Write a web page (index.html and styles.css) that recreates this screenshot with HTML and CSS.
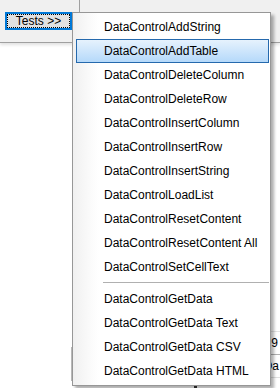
FILE: index.html
```html
<!DOCTYPE html>
<html lang="en">
<head>
    <meta charset="UTF-8">
    <meta name="viewport" content="width=device-width, initial-scale=1.0">
    <title>Tests menu</title>
    <link rel="stylesheet" href="styles.css">
</head>
<body>

<div class="toolbar">
    <div class="toolbar-edge"></div>
    <button class="tests-button"><span class="focus-box">Tests &gt;&gt;</span></button>
</div>

<div class="grid-behind">
    <div class="grid-row">9</div>
    <div class="grid-row">Da</div>
</div>
<div class="box-edge"></div>
<div class="dark-mark"></div>

<div class="popup-menu">
    <div class="menu-item">DataControlAddString</div>
    <div class="menu-item active">DataControlAddTable</div>
    <div class="menu-item">DataControlDeleteColumn</div>
    <div class="menu-item">DataControlDeleteRow</div>
    <div class="menu-item">DataControlInsertColumn</div>
    <div class="menu-item">DataControlInsertRow</div>
    <div class="menu-item">DataControlInsertString</div>
    <div class="menu-item">DataControlLoadList</div>
    <div class="menu-item">DataControlResetContent</div>
    <div class="menu-item">DataControlResetContent All</div>
    <div class="menu-item">DataControlSetCellText</div>
    <div class="menu-separator"></div>
    <div class="menu-item">DataControlGetData</div>
    <div class="menu-item">DataControlGetData Text</div>
    <div class="menu-item">DataControlGetData CSV</div>
    <div class="menu-item">DataControlGetData HTML</div>
</div>

</body>
</html>
```

FILE: styles.css
```css
body {
    margin: 0;
    padding: 0;
    width: 280px;
    height: 388px;
    overflow: hidden;
    background-color: #ffffff;
    font-family: "Liberation Sans", Arial, sans-serif;
    font-size: 12px;
    color: #000;
    position: relative;
}
.toolbar {
    height: 43px;
    background-color: #f0f0f0;
    border-bottom: 1px solid #a0a0a0;
    box-shadow: 0 2px 3px rgba(0, 0, 0, 0.12);
    padding: 12px 0 0 5px;
    box-sizing: border-box;
    position: relative;
}
.toolbar-edge {
    position: absolute;
    left: 79px;
    top: 0;
    width: 1px;
    height: 12px;
    background-color: #a0a0a0;
}
.tests-button {
    width: 67px;
    height: 18px;
    padding: 1px;
    margin: 0;
    border: 1px solid #0078d7;
    background-color: #e1e1e1;
    box-shadow: inset 0 0 0 1px #0078d7;
    font-family: inherit;
    font-size: 12px;
    color: #000;
    display: flex;
}
.focus-box {
    flex: 1;
    border: 1px dotted #000;
    display: flex;
    align-items: center;
    justify-content: center;
    line-height: 1;
}
.grid-behind {
    position: absolute;
    left: 250px;
    top: 331px;
    width: 30px;
    border-top: 1px solid #e4e4e4;
}
.grid-row {
    height: 22px;
    line-height: 22px;
    text-align: right;
    padding-right: 2px;
    border-bottom: 1px solid #b0b0b0;
    font-size: 12px;
    color: #000;
}
.grid-row + .grid-row {
    padding-right: 1px;
    border-bottom-color: #e0e0e0;
}
.box-edge {
    position: absolute;
    left: 71px;
    top: 347px;
    width: 1px;
    height: 34px;
    background-color: #b8b8b8;
}
.dark-mark {
    position: absolute;
    left: 194px;
    top: 383px;
    width: 3px;
    height: 5px;
    background-color: #333;
}
.popup-menu {
    position: absolute;
    left: 72px;
    top: 12px;
    width: 199px;
    padding: 2px 1px 2px 3px;
    background: linear-gradient(to right, #f0f0f0 0px, #fbfbfb 18px, #ffffff 26px);
    border: 1px solid #979797;
    box-shadow: 3px 3px 3px rgba(0, 0, 0, 0.32);
    box-sizing: border-box;
}
.menu-item {
    height: 24px;
    line-height: 22px;
    padding-left: 27px;
    border: 1px solid transparent;
    white-space: nowrap;
    box-sizing: border-box;
}
.menu-item.active {
    border-color: #2569ad;
    background: linear-gradient(to bottom, #e6f2fd, #b5d9fa);
}
.menu-separator {
    height: 8px;
    margin-left: 27px;
    background: linear-gradient(#b0b0b0, #b0b0b0) no-repeat 0 3px / 100% 1px;
}
```
